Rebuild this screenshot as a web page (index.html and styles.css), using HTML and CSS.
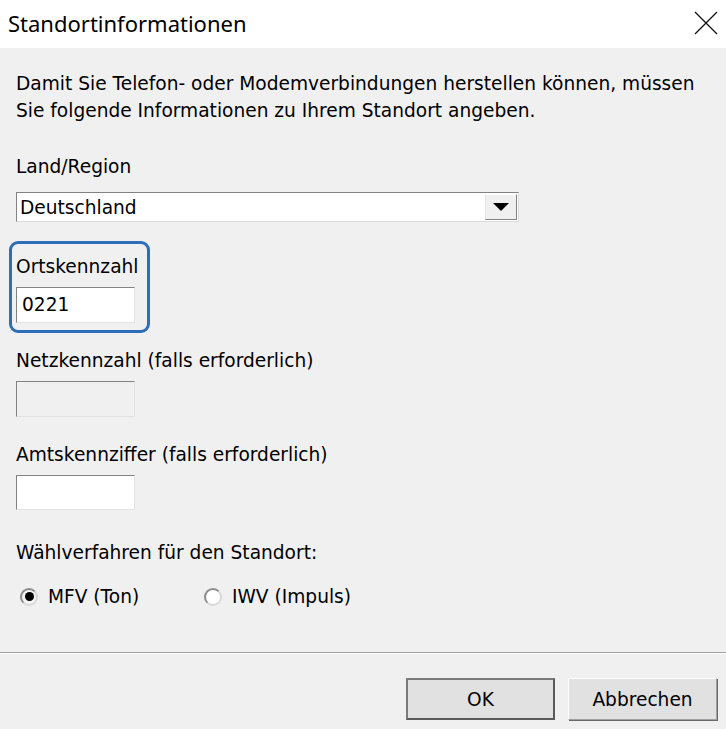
FILE: index.html
```html
<!DOCTYPE html>
<html lang="de">
<head>
<meta charset="utf-8">
<title>Standortinformationen</title>
<link rel="stylesheet" href="styles.css">
</head>
<body>
<div class="dialog">
  <header class="titlebar">
    <span class="title">Standortinformationen</span>
    <svg class="close" width="24" height="24" viewBox="0 0 24 24" aria-label="Schließen">
      <path d="M1 1 L23 23 M23 1 L1 23" stroke="#111" stroke-width="1.3" fill="none"/>
    </svg>
  </header>
  <main class="content">
    <p class="desc">Damit Sie Telefon- oder Modemverbindungen herstellen können, müssen<br>Sie folgende Informationen zu Ihrem Standort angeben.</p>

    <div class="label land">Land/Region</div>
    <div class="select">
      <span class="select-value">Deutschland</span>
      <span class="select-btn"><span class="tri"></span></span>
    </div>

    <div class="focus-box">
      <div class="label">Ortskennzahl</div>
      <div class="input">0221</div>
    </div>

    <div class="label net">Netzkennzahl (falls erforderlich)</div>
    <div class="input disabled"></div>

    <div class="label amt">Amtskennziffer (falls erforderlich)</div>
    <div class="input"></div>

    <div class="label waehl">Wählverfahren für den Standort:</div>
    <div class="radios">
      <label class="radio first"><span class="dot checked"></span>MFV (Ton)</label>
      <label class="radio"><span class="dot"></span>IWV (Impuls)</label>
    </div>
  </main>
  <div class="separator"></div>
  <footer class="buttons">
    <button class="btn default">OK</button>
    <button class="btn">Abbrechen</button>
  </footer>
</div>
</body>
</html>
```

FILE: styles.css
```css
html, body {
  margin: 0;
  padding: 0;
}
body {
  background: #f0f0f0;
  font-family: "DejaVu Sans", Verdana, sans-serif;
  font-size: 18.6px;
  color: #000;
  width: 726px;
  height: 729px;
  overflow: hidden;
}
.titlebar {
  height: 48px;
  background: #fff;
  display: flex;
  align-items: center;
  justify-content: space-between;
  padding: 0 8px 0 8px;
}
.title {
  font-family: "Noto Sans", "Open Sans", sans-serif;
  font-size: 22px;
  color: #000;
  margin-top: -2px;
}
.close {
  margin-top: -2px;
}
.content {
  padding: 0 16px;
}
.desc {
  margin: 22px 0 0 0;
  line-height: 27px;
}
.label {
  line-height: 27px;
  height: 27px;
  white-space: nowrap;
}
.land {
  margin-top: 29px;
}
.select {
  margin-top: 12px;
  width: 503px;
  height: 30px;
  box-sizing: border-box;
  background: #fff;
  border: 1px solid;
  border-color: #828282 #dcdcdc #dcdcdc #828282;
  display: flex;
  align-items: center;
  justify-content: space-between;
}
.select-value {
  padding-left: 3px;
  line-height: 27px;
}
.select-btn {
  width: 32px;
  height: 26px;
  margin-right: 1px;
  box-sizing: border-box;
  background: #f0f0f0;
  border: 1px solid;
  border-color: #fff #828282 #828282 #e3e3e3;
  display: flex;
  align-items: center;
  justify-content: center;
}
.tri {
  width: 0;
  height: 0;
  border-left: 8px solid transparent;
  border-right: 8px solid transparent;
  border-top: 8px solid #000;
}
.focus-box {
  margin: 19px 0 0 -7px;
  width: 141px;
  height: 92px;
  box-sizing: border-box;
  border: 3px solid #2e6db7;
  border-radius: 9px;
  padding: 9px 0 0 4px;
}
.input {
  width: 119px;
  height: 36px;
  box-sizing: border-box;
  background: #fff;
  border: 1px solid;
  border-color: #828282 #e3e3e3 #e3e3e3 #828282;
  padding-left: 5px;
  line-height: 33px;
}
.focus-box .input {
  margin-top: 7px;
}
.input.disabled {
  background: #f0f0f0;
}
.net {
  margin-top: 14px;
}
.net + .input {
  margin-top: 7px;
}
.amt {
  margin-top: 24px;
}
.amt + .input {
  margin-top: 7px;
  height: 35px;
}
.waehl {
  margin-top: 29px;
}
.radios {
  margin-top: 17px;
  display: flex;
  height: 27px;
  align-items: center;
}
.radio {
  display: flex;
  align-items: center;
  gap: 10px;
  line-height: 27px;
  white-space: nowrap;
}
.radio.first {
  width: 184px;
}
.dot {
  width: 18px;
  height: 18px;
  margin-left: 4px;
  box-sizing: border-box;
  border-radius: 50%;
  background: #fff;
  border: 2px solid;
  border-color: #8c8c8c #d8d8d8 #d8d8d8 #8c8c8c;
  position: relative;
  flex: none;
}
.dot.checked {
  background: #f4f4f4;
}
.dot.checked::after {
  content: "";
  position: absolute;
  left: 2.5px;
  top: 2.5px;
  width: 9px;
  height: 9px;
  border-radius: 50%;
  background: #000;
}
.separator {
  margin-top: 42px;
  height: 1px;
  background: #a0a0a0;
  border-bottom: 1px solid #fff;
}
.buttons {
  display: flex;
  justify-content: flex-end;
  gap: 13px;
  padding: 24px 9px 0 0;
}
.btn {
  width: 149px;
  height: 42px;
  box-sizing: border-box;
  font-family: "DejaVu Sans", Verdana, sans-serif;
  font-size: 18.6px;
  color: #000;
  background: #e1e1e1;
  border: 1px solid;
  border-color: #fff #a0a0a0 #a0a0a0 #fff;
  box-shadow: 1px 1px 0 #696969;
  padding: 0;
}
.btn.default {
  border: 2px solid;
  border-color: #7a7a7a #5a5a5a #5a5a5a #7a7a7a;
  box-shadow: none;
}
```
